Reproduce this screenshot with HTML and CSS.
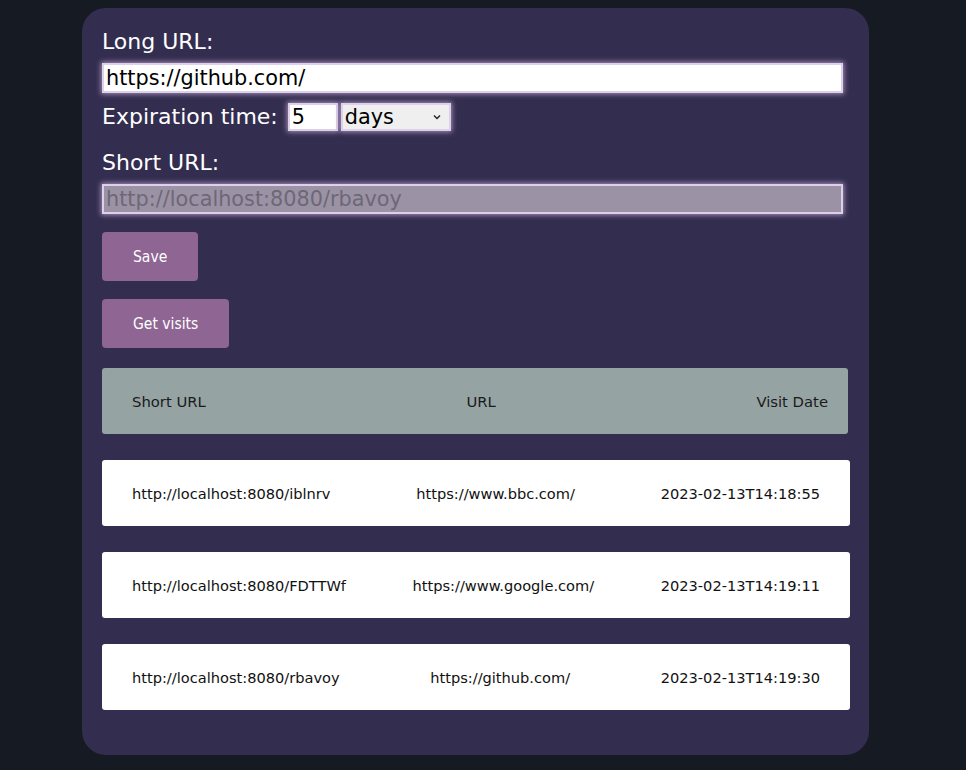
FILE: index.html
```html
<!DOCTYPE html>
<html lang="en">
<head>
<meta charset="utf-8">
<title>URL Shortener</title>
<link rel="stylesheet" href="styles.css">
</head>
<body>
<main class="card">
  <label class="lbl" for="long">Long URL:</label>
  <input id="long" class="field long" type="text" value="https://github.com/">
  <div class="exp">
    <span class="lbl">Expiration time:</span>
    <input class="field num" type="text" value="5">
    <div class="sel-wrap">
      <select class="sel"><option>days</option></select>
      <svg class="chev" width="8" height="6" viewBox="0 0 8 6"><path d="M1 1.5 L4 4.5 L7 1.5" fill="none" stroke="#222" stroke-width="1.4"/></svg>
    </div>
  </div>
  <label class="lbl short-lbl" for="short">Short URL:</label>
  <input id="short" class="field short" type="text" value="http://localhost:8080/rbavoy" disabled>
  <div class="actions">
    <button class="btn">Save</button>
    <button class="btn">Get visits</button>
  </div>
  <section class="table">
    <div class="thead">
      <span>Short URL</span><span>URL</span><span>Visit Date</span>
    </div>
    <div class="row">
      <span>http://localhost:8080/iblnrv</span><span>https://www.bbc.com/</span><span>2023-02-13T14:18:55</span>
    </div>
    <div class="row">
      <span>http://localhost:8080/FDTTWf</span><span>https://www.google.com/</span><span>2023-02-13T14:19:11</span>
    </div>
    <div class="row">
      <span>http://localhost:8080/rbavoy</span><span>https://github.com/</span><span>2023-02-13T14:19:30</span>
    </div>
  </section>
</main>
</body>
</html>
```
FILE: styles.css
```css
html, body {
  margin: 0;
  padding: 0;
  background: #161a23;
}
body {
  padding: 8px 0 15px 82px;
  font-family: "DejaVu Sans", Verdana, sans-serif;
}
.card {
  width: 787px;
  box-sizing: border-box;
  background: #332e50;
  border-radius: 24px;
  padding: 21px 20px 45px 20px;
  display: flex;
  flex-direction: column;
  align-items: flex-start;
}
.lbl {
  color: #ffffff;
  font-size: 22px;
  line-height: 26px;
  display: block;
}
.field {
  font-family: "DejaVu Sans", Verdana, sans-serif;
  font-size: 20.8px;
  box-sizing: border-box;
  border: 2px solid #dcd0ea;
  box-shadow: 0 0 5px 1px #a990b8;
  outline: none;
  background: #ffffff;
  color: #000;
  padding: 0 2px;
  margin: 0;
}
.long {
  margin-top: 8px;
  width: 741px;
  height: 30px;
}
.exp {
  margin-top: 10px;
  display: flex;
  align-items: center;
  height: 28px;
}
.num {
  margin-left: 10px;
  width: 50px;
  height: 28px;
}
.sel-wrap {
  position: relative;
  margin-left: 3px;
}
.sel {
  appearance: none;
  -webkit-appearance: none;
  width: 110px;
  height: 28px;
  box-sizing: border-box;
  border: 2px solid #dcd0ea;
  box-shadow: 0 0 5px 1px #a990b8;
  background: #efefef;
  font-family: "DejaVu Sans", Verdana, sans-serif;
  font-size: 20.8px;
  color: #000;
  padding: 0 2px;
  margin: 0;
  border-radius: 0;
}
.chev {
  position: absolute;
  right: 10px;
  top: 11px;
}
.short-lbl {
  margin-top: 19px;
}
.short {
  margin-top: 8px;
  width: 741px;
  height: 30px;
  background: #9b93a5;
  color: #6d6875;
  -webkit-text-fill-color: #6d6875;
}
.actions {
  display: flex;
  flex-direction: column;
  align-items: flex-start;
  gap: 18px;
  margin-top: 18px;
}
.btn {
  height: 49px;
  padding: 0 31px;
  border: none;
  border-radius: 4px;
  background: #8e6593;
  color: #ffffff;
  font-family: "DejaVu Sans Condensed", "DejaVu Sans", sans-serif;
  font-size: 15.5px;
  cursor: pointer;
}
.table {
  margin-top: 20px;
  display: flex;
  flex-direction: column;
  gap: 26px;
  align-self: stretch;
}
.thead, .row {
  height: 66px;
  display: flex;
  justify-content: space-between;
  align-items: center;
  box-sizing: border-box;
  border-radius: 3px;
}
.thead {
  width: 746px;
  background: #95a3a3;
  padding: 0 20px 0 30px;
  font-size: 14.8px;
  color: #1a1a1a;
}
.row {
  width: 748px;
  background: #ffffff;
  padding: 0 30px;
  font-size: 14.6px;
  color: #111;
}
```
